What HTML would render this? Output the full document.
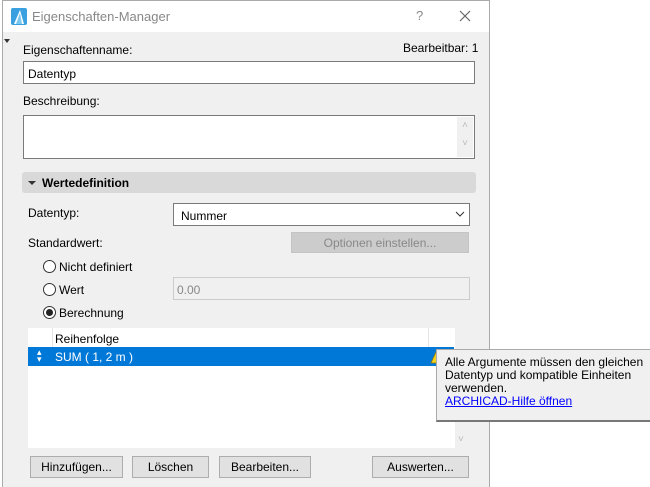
<!DOCTYPE html>
<html><head><meta charset="utf-8"><style>
*{box-sizing:border-box;margin:0;padding:0}
body{width:650px;height:487px;background:#fff;font-family:"Liberation Sans",sans-serif;font-size:12px;color:#000;position:relative;overflow:hidden}
.a{position:absolute}
.win{left:2px;top:0;width:488px;height:487px;border:1px solid #aaa;border-bottom:none;background:#f0f0f0}
.tb{left:3px;top:1px;width:486px;height:31px;background:#fff}
.in{background:#fff;border:1px solid #7a7a7a}
.btn{background:#e1e1e1;border:1px solid #adadad;text-align:center;line-height:20px}
.rad{width:13px;height:13px;border:1px solid #333;border-radius:50%;background:#fff}
</style></head><body>
<div class="a win"></div>
<div class="a tb"></div>
<svg class="a" style="left:11px;top:8px" width="16" height="17"><rect width="16" height="17" rx="2" fill="#3aa0e0"/><path d="M3 16 L9 2 L13 16 Z" fill="#fff"/><path d="M5 16 L9 5 L11 16Z" fill="#7cc8f0"/></svg>
<div class="a" style="left:32px;top:9px;font-size:13px;color:#888">Eigenschaften-Manager</div>
<div class="a" style="left:416px;top:8px;font-size:13px;color:#888">?</div>
<svg class="a" style="left:459px;top:10px" width="12" height="12"><path d="M1 1L11 11M11 1L1 11" stroke="#666" stroke-width="1.2"/></svg>
<div class="a" style="left:4px;top:39px;border-left:3px solid transparent;border-right:3px solid transparent;border-top:4px solid #333"></div>
<div class="a" style="left:23px;top:43px">Eigenschaftenname:</div>
<div class="a" style="left:403px;top:41px">Bearbeitbar: 1</div>
<div class="a in" style="left:23px;top:61px;width:452px;height:23px;padding:5px 4px">Datentyp</div>
<div class="a" style="left:23px;top:94px">Beschreibung:</div>
<div class="a in" style="left:23px;top:115px;width:452px;height:44px"></div>
<div class="a" style="left:457px;top:117px;width:16px;height:40px;background:#f0f0f0;color:#bbb;font-size:10px;text-align:center;line-height:18px">˄<br>˅</div>
<div class="a" style="left:22px;top:172px;width:454px;height:21px;background:#d9d9d9;border-radius:3px"></div>
<div class="a" style="left:28px;top:181px;border-left:4px solid transparent;border-right:4px solid transparent;border-top:4px solid #333"></div>
<div class="a" style="left:42px;top:176px;font-weight:bold">Wertedefinition</div>
<div class="a" style="left:28px;top:206px">Datentyp:</div>
<div class="a in" style="left:173px;top:203px;width:297px;height:23px;padding:5px 7px">Nummer</div>
<svg class="a" style="left:455px;top:211px" width="10" height="6"><path d="M1 1L5 5L9 1" stroke="#333" fill="none"/></svg>
<div class="a" style="left:28px;top:236px">Standardwert:</div>
<div class="a btn" style="left:291px;top:232px;width:178px;height:21px;background:#ccc;border-color:#c4c4c4;color:#888">Optionen einstellen...</div>
<div class="a rad" style="left:43px;top:260px"></div><div class="a" style="left:59px;top:260px">Nicht definiert</div>
<div class="a rad" style="left:43px;top:283px"></div><div class="a" style="left:59px;top:283px">Wert</div>
<div class="a" style="left:173px;top:277px;width:297px;height:23px;border:1px solid #ccc;background:#f0f0f0;color:#888;padding:5px 3px">0.00</div>
<div class="a rad" style="left:43px;top:306px"></div><div class="a" style="left:46px;top:309px;width:7px;height:7px;border-radius:50%;background:#222"></div><div class="a" style="left:59px;top:306px">Berechnung</div>
<div class="a" style="left:28px;top:328px;width:427px;height:120px;background:#fff"></div>
<div class="a" style="left:52px;top:328px;width:1px;height:19px;background:#e5e5e5"></div>
<div class="a" style="left:428px;top:328px;width:1px;height:19px;background:#e5e5e5"></div>
<div class="a" style="left:55px;top:332px">Reihenfolge</div>
<div class="a" style="left:28px;top:347px;width:426px;height:19px;background:#0078d7;color:#fff"></div>
<div class="a" style="left:37px;top:349px;color:#fff;font-size:9px;line-height:7px">▴<br>▾</div>
<div class="a" style="left:55px;top:350px;color:#fff">SUM ( 1, 2 m )</div>
<svg class="a" style="left:430px;top:351px" width="12" height="13"><path d="M6 1L11 12H1Z" fill="#f5d21e" stroke="#8a7a10" stroke-width=".8"/></svg>
<div class="a" style="left:458px;top:434px;color:#bbb;font-size:10px">˅</div>
<div class="a btn" style="left:30px;top:456px;width:93px;height:22px">Hinzufügen...</div>
<div class="a btn" style="left:132px;top:456px;width:77px;height:22px">Löschen</div>
<div class="a btn" style="left:219px;top:456px;width:92px;height:22px">Bearbeiten...</div>
<div class="a btn" style="left:372px;top:456px;width:97px;height:22px">Auswerten...</div>
<div class="a" style="left:436px;top:349px;width:216px;height:73px;background:#f0f0f0;border:1px solid #aaa;border-bottom:2px solid #777;padding:6px 0 0 8px;line-height:13px">Alle Argumente müssen den gleichen<br>Datentyp und kompatible Einheiten<br>verwenden.<br><span style="color:#00f;text-decoration:underline">ARCHICAD-Hilfe öffnen</span></div>
</body></html>
